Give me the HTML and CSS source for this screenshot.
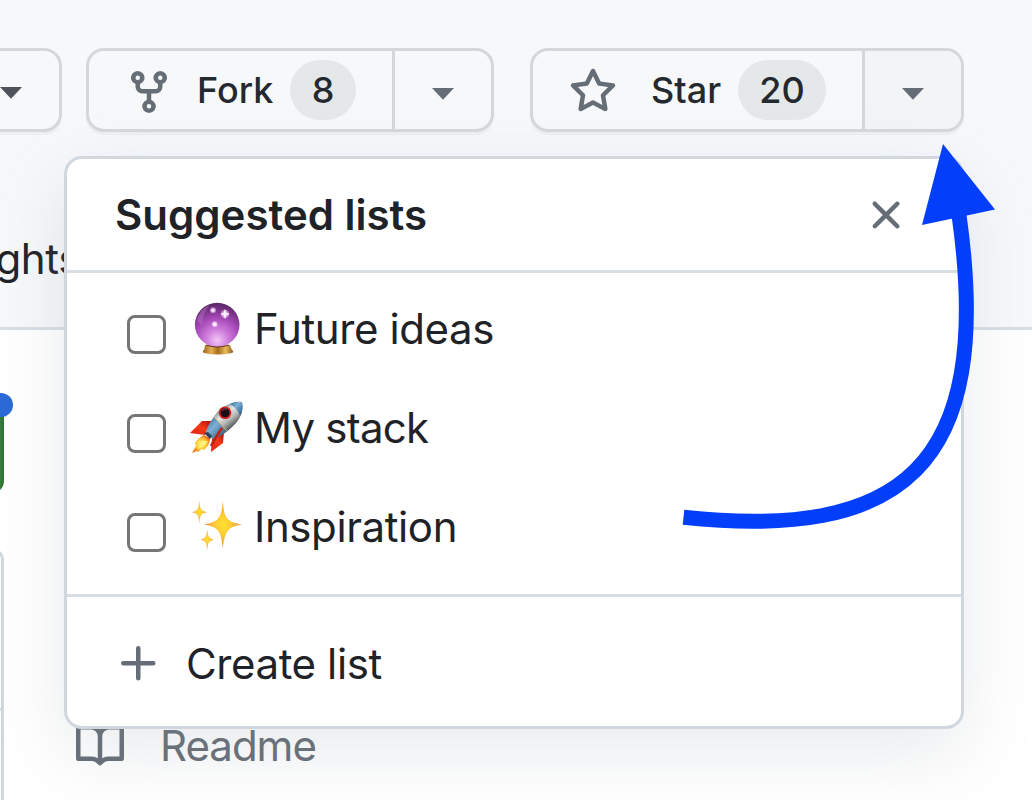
FILE: index.html
```html
<!DOCTYPE html>
<html lang="en">
<head>
<meta charset="utf-8">
<title>Suggested lists</title>
<link rel="stylesheet" href="styles.css">
</head>
<body>
<div class="page">
  <header class="repo-header">
    <div class="actions">
      <div class="btn-group watch"><button class="btn watch-btn"><svg class="caret caret-dark" viewBox="0 0 22 12"><path d="M0 0h22L11 11.7z"/></svg></button></div>
      <div class="btn-group fork">
        <button class="btn main"><svg class="icon" viewBox="0 0 16 16"><path d="M5 5.372v.878c0 .414.336.75.75.75h4.5a.75.75 0 0 0 .75-.75v-.878a2.25 2.25 0 1 1 1.5 0v.878a2.25 2.25 0 0 1-2.25 2.25h-1.5v2.128a2.251 2.251 0 1 1-1.5 0V8.5h-1.5A2.25 2.25 0 0 1 3.5 6.25v-.878a2.25 2.25 0 1 1 1.5 0ZM5 3.25a.75.75 0 1 0-1.5 0 .75.75 0 0 0 1.5 0Zm6.75.75a.75.75 0 1 0 0-1.5.75.75 0 0 0 0 1.5Zm-3 8.75a.75.75 0 1 0-1.5 0 .75.75 0 0 0 1.5 0Z"/></svg><span class="label label-fork">Fork</span><span class="counter counter-fork">8</span></button>
        <button class="btn drop"><svg class="caret" viewBox="0 0 22 12"><path d="M0 0h22L11 11.7z"/></svg></button>
      </div>
      <div class="btn-group star">
        <button class="btn main"><svg class="icon" viewBox="0 0 16 16"><path d="M8 .25a.75.75 0 0 1 .673.418l1.882 3.815 4.21.612a.75.75 0 0 1 .416 1.279l-3.046 2.97.719 4.192a.751.751 0 0 1-1.088.791L8 12.347l-3.766 1.98a.75.75 0 0 1-1.088-.79l.72-4.194L.818 6.374a.75.75 0 0 1 .416-1.28l4.21-.611L7.327.668A.75.75 0 0 1 8 .25Zm0 2.445L6.615 5.5a.75.75 0 0 1-.564.41l-3.097.45 2.24 2.184a.75.75 0 0 1 .216.664l-.528 3.084 2.769-1.456a.75.75 0 0 1 .698 0l2.77 1.456-.53-3.084a.75.75 0 0 1 .216-.664l2.24-2.183-3.096-.45a.75.75 0 0 1-.564-.41L8 2.694Z"/></svg><span class="label label-star">Star</span><span class="counter counter-star">20</span></button>
        <button class="btn drop active"><svg class="caret" viewBox="0 0 22 12"><path d="M0 0h22L11 11.7z"/></svg></button>
      </div>
    </div>
    <nav class="tabs"><span class="tab">Insights</span></nav>
  </header>
  <main class="content">
    <div class="files">
      <div class="code-btn"><span class="dot"></span></div>
      <div class="file-box"><div class="file-row"></div></div>
    </div>
    <aside class="sidebar">
      <a class="readme"><svg class="icon" viewBox="0 0 16 16"><path d="M0 1.75A.75.75 0 0 1 .75 1h4.253c1.227 0 2.317.59 3 1.501A3.743 3.743 0 0 1 11.006 1h4.245a.75.75 0 0 1 .75.75v10.5a.75.75 0 0 1-.75.75h-4.507a2.25 2.25 0 0 0-1.591.659l-.622.621a.75.75 0 0 1-1.06 0l-.622-.621A2.25 2.25 0 0 0 5.258 13H.75a.75.75 0 0 1-.75-.75Zm7.251 10.324.004-5.073-.002-2.253A2.25 2.25 0 0 0 5.003 2.5H1.5v9h3.757a3.75 3.75 0 0 1 1.994.574ZM8.755 4.75l-.004 7.322a3.752 3.752 0 0 1 1.992-.572H14.5v-9h-3.495a2.25 2.25 0 0 0-2.25 2.25Z"/></svg><span class="readme-text">Readme</span></a>
    </aside>
  </main>

  <section class="popover">
    <div class="pop-head"><h2 class="title">Suggested lists</h2><svg class="icon" viewBox="0 0 16 16"><path d="M3.72 3.72a.75.75 0 0 1 1.06 0L8 6.94l3.22-3.22a.749.749 0 0 1 1.275.326.749.749 0 0 1-.215.734L9.06 8l3.22 3.22a.749.749 0 0 1-.326 1.275.749.749 0 0 1-.734-.215L8 9.06l-3.22 3.22a.751.751 0 0 1-1.042-.018.751.751 0 0 1-.018-1.042L6.94 8 3.72 4.78a.75.75 0 0 1 0-1.06Z"/></svg></div>
    <div class="pop-list">
      <label class="row"><span class="check"></span>
        <svg class="emoji" viewBox="0 0 54 54">
          <defs>
            <radialGradient id="ball" cx=".5" cy=".85" r=".86"><stop offset="0" stop-color="#f3c6f5"/><stop offset=".3" stop-color="#cd7bdb"/><stop offset=".6" stop-color="#a448b5"/><stop offset=".84" stop-color="#743082"/><stop offset="1" stop-color="#55265f"/></radialGradient>
            <linearGradient id="gold"><stop offset="0" stop-color="#94611d"/><stop offset=".28" stop-color="#e3b052"/><stop offset=".5" stop-color="#a66d1e"/><stop offset=".75" stop-color="#e8bd5b"/><stop offset="1" stop-color="#8c5a1a"/></linearGradient>
          </defs>
          <path d="M15 43h25q1 4 3 6 1 1-1 2-14 3-28 0-2-1-1-2 2-2 2-6z" fill="url(#gold)"/>
          <ellipse cx="27.2" cy="22.800" rx="22.300" ry="22" fill="url(#ball)"/>
          <path d="M16 43q11 4 23 0" fill="none" stroke="#6f3c2b" stroke-width="1.2"/>
          <path d="M7 19q2-12 13-16-7 7-8 20z" fill="#bd83cb" opacity=".4"/>
          <g fill="#fff"><path d="M35 7l1.4 3.5 3.2 1.5-3.2 1.6L35 17l-1.4-3.4-3.2-1.6 3.2-1.5z"/><circle cx="23" cy="8.3" r="1.8"/><circle cx="24.7" cy="22.2" r="2"/></g>
          <g fill="#fbdcff" opacity=".5"><circle cx="35" cy="12" r="4.2"/><circle cx="23" cy="8.3" r="3"/><circle cx="24.7" cy="22.2" r="3"/></g>
        </svg><span class="row-text t1">Future ideas</span></label>
      <label class="row"><span class="check"></span>
        <svg class="emoji" viewBox="0 0 54 54">
          <defs>
            <linearGradient id="hull" x1=".3" y1=".2" x2=".72" y2=".72"><stop offset="0" stop-color="#70777c"/><stop offset=".35" stop-color="#e6e8e8"/><stop offset=".65" stop-color="#b4b6b4"/><stop offset="1" stop-color="#44484b"/></linearGradient>
            <linearGradient id="fin" x1="1" y1="0" x2="0" y2="1"><stop offset="0" stop-color="#a90f08"/><stop offset=".45" stop-color="#f33a16"/><stop offset="1" stop-color="#e3220f"/></linearGradient>
            <linearGradient id="blue" x1="0" y1="0" x2="1" y2="1"><stop offset="0" stop-color="#2c618d"/><stop offset=".4" stop-color="#7fb0d6"/><stop offset="1" stop-color="#184a74"/></linearGradient>
            <radialGradient id="flame"><stop offset="0" stop-color="#fff58a"/><stop offset=".6" stop-color="#fdc832"/><stop offset="1" stop-color="#ee7220"/></radialGradient>
          </defs>
          <path d="M22 20 12 20 0 32l15 2z" fill="url(#fin)"/>
          <path d="M34 31l-1 11-12 9 1-15z" fill="url(#fin)"/>
          <path d="M14 34q-8 4-9 9l1 2-4 7 5-2 1 1 4-3 2 1q6-5 6-12z" fill="url(#flame)"/>
          <path d="M12 40l-4 8 7-4 3-4z" fill="#fff27a"/>
          <path d="M52 1q3 14-11 26-7 7-18 11l-7-7Q21 18 29 9 40 0 52 1z" fill="url(#hull)"/>
          <path d="M16 31q3-9 8-15l13 14q-6 5-14 8z" fill="url(#blue)"/>
          <path d="M40 3q5-3 12-2 2 7-2 14-2-7-10-12z" fill="url(#blue)"/>
          <path d="M24 16l13 14" stroke="#d6b565" stroke-width="1"/>
          <path d="M32 27Q27 34 21 45" stroke="#c0200f" stroke-width="2.500" fill="none"/>
          <path d="M14 32l4-1 4 4-2 3z" fill="#26445b"/>
          <circle cx="35" cy="11.700" r="6.300" fill="#d51f1c"/><circle cx="35" cy="11.700" r="4.600" fill="#160f12"/><path d="M32 10q2-3 5-2" stroke="#75535a" stroke-width="1" fill="none"/>
        </svg><span class="row-text t2">My stack</span></label>
      <label class="row"><span class="check"></span>
        <svg class="emoji" viewBox="0 0 54 54">
          <defs><radialGradient id="spark"><stop offset="0" stop-color="#ffe12f"/><stop offset=".45" stop-color="#fdc936"/><stop offset="1" stop-color="#ed8a4a"/></radialGradient></defs>
          <g fill="url(#spark)">
            <path d="M32.800 1C34 17 36 22 52 24.500 37 27 35 32 32.800 48.500 31 32 29 27 14 24.500 29 22 31.500 17 32.800 1z"/>
            <path d="M9.300 1C10 9 11 11 17 12.200 11 13.500 10 15 9.300 23 8.500 15 7.500 13.500 2 12.200 7.500 11 8.500 9 9.300 1z"/>
            <path d="M17.300 29.500C18 36.500 19 38.500 24 39.700 19 41 18 42.500 17.300 50 16.500 42.500 15.500 41 10.500 39.700 15.500 38.500 16.500 36.500 17.300 29.500z"/>
          </g>
        </svg><span class="row-text t3">Inspiration</span></label>
    </div>
    <div class="pop-foot"><svg class="icon" viewBox="0 0 16 16"><path d="M7.750 2a.75.75 0 0 1 .75.75V7h4.250a.75.75 0 0 1 0 1.500H8.500v4.250a.75.75 0 0 1-1.500 0V8.500H2.750a.75.75 0 0 1 0-1.500H7V2.750A.75.75 0 0 1 7.750 2Z"/></svg><span class="create">Create list</span></div>
  </section>

  <svg class="arrow" viewBox="0 0 1032 800"><path d="M683.500 517.300C899 540 995 470 959 215" fill="none" stroke="#033ffa" stroke-width="15"/><path d="M943 144L995 209.500 922 225z" fill="#033ffa"/></svg>
</div>
</body>
</html>
```
FILE: styles.css
```css
* { box-sizing: border-box; }
body { margin: 0; font-family: Inter, "Liberation Sans", sans-serif; color: #1f2328; background: #fff; }
.page { position: relative; width: 1032px; height: 800px; overflow: hidden; display: flex; flex-direction: column; }
.icon { width: 48px; height: 48px; fill: #656d76; flex: none; display: block; }

.repo-header { height: 330px; flex: none; background: #f6f8fa; border-bottom: 3px solid #d8dee4; padding-top: 48px; }
.actions { display: flex; height: 84px; }
.btn-group { display: flex; flex: none; border: 3px solid #d5d8da; border-radius: 18px; box-shadow: 0 3px 0 rgba(31, 35, 40, .04); }
.watch { width: 62px; border-left: 0; border-radius: 0 18px 18px 0; margin-right: 24px; }
.fork { width: 408px; margin-right: 36px; }
.star { width: 434px; }
.btn { font: inherit; color: #24292f; background: none; border: 0; margin: 0; padding: 0; display: flex; align-items: center; }
.main { flex: 1; padding-left: 36px; }
.main .icon { margin-top: 4px; }
.drop { width: 99px; padding: 8px 0 0 37px; border-left: 3px solid #d5d8da; border-radius: 0 15px 15px 0; }
.active { background: #f3f4f6; }
.caret { width: 22px; height: 12px; fill: #656d76; display: block; }
.caret-dark { fill: #4d5358; }
.watch-btn { padding-top: 5px; }
.label { font-size: 36px; font-weight: 500; line-height: 48px; text-align: left; }
.label-fork { margin-left: 24px; width: 93px; }
.label-star { margin-left: 34px; width: 87px; }
.counter { height: 60px; border-radius: 30px; background: #e4e8e9; font-size: 36px; font-weight: 500; line-height: 60px; text-align: center; }
.counter-fork { width: 66px; }
.counter-star { width: 88px; }

.tabs { display: flex; justify-content: flex-end; width: 80px; margin-top: 97px; }
.tab { font-size: 42px; line-height: 60px; letter-spacing: -.4px; }

.content { display: flex; flex: 1; min-height: 0; }
.files { width: 76px; padding-top: 64px; }
.code-btn { position: relative; width: 24px; margin-left: -20px; height: 99px; background: #347d39; border-right: 2px solid #2f7437; border-radius: 18px; }
.dot { position: absolute; right: -11px; top: -1px; width: 24px; height: 24px; border-radius: 50%; background: #2b6ad6; }
.file-box { width: 24px; margin: 55px 0 0 -20px; height: 300px; border: 3px solid #d0d7de; border-radius: 18px; }
.file-row { height: 160px; border-bottom: 3px solid #d8dee4; }
.sidebar { padding-top: 392px; }
.readme { display: flex; align-items: center; height: 48px; color: #656d76; font-size: 42px; line-height: 48px; letter-spacing: -1px; }
.readme-text { margin-left: 36px; }

.popover { position: absolute; left: 64px; top: 156px; width: 900px; height: 573px; background: #fff; border: 3px solid #d0d7de; border-radius: 18px; box-shadow: 0 24px 72px rgba(140, 149, 159, .2); display: flex; flex-direction: column; }
.pop-head { height: 114px; flex: none; border-bottom: 3px solid #d8dee4; padding: 0 51px 0 48px; display: flex; align-items: center; justify-content: space-between; }
.title { margin: 0; font-size: 42px; font-weight: 600; line-height: 60px; white-space: nowrap; }
.pop-list { height: 324px; flex: none; border-bottom: 3px solid #d8dee4; padding: 6px 0 0 60px; }
.row { display: flex; align-items: center; height: 99px; font-size: 42px; line-height: 60px; }
.check { width: 39px; height: 39px; margin-top: 12px; border: 3px solid #767676; border-radius: 8px; }
.emoji { width: 54px; height: 54px; margin-left: 24px; margin-top: 1px; }
.row-text { margin-left: 10px; padding-top: 1px; white-space: nowrap; }
.t1 { letter-spacing: -.4px; }
.t2 { letter-spacing: -.75px; }
.t3 { letter-spacing: -.4px; }
.pop-foot { flex: 1; display: flex; align-items: center; padding: 5px 0 0 48px; font-size: 42px; line-height: 60px; }
.create { margin-left: 23px; letter-spacing: -.4px; }
.arrow { position: absolute; left: 0; top: 0; width: 1032px; height: 800px; }
```
